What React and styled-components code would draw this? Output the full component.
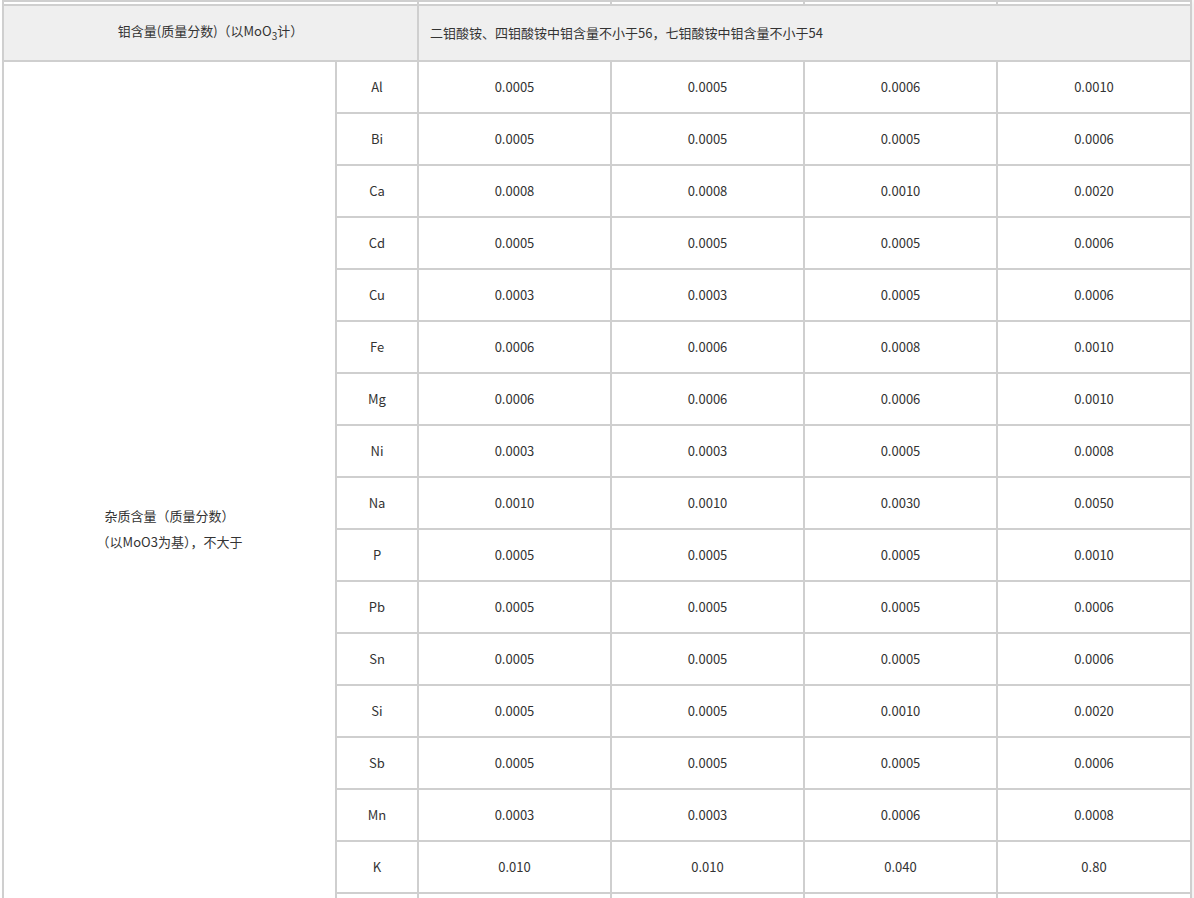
import React from "react";
import styled, { createGlobalStyle } from "styled-components";

const Global = createGlobalStyle`
  html, body { margin: 0; padding: 0; background: #fff; overflow: hidden; }
  body { font-family: "Microsoft YaHei", "Noto Sans CJK SC", "Noto Sans", sans-serif; color: #333; }
`;

const Page = styled.div`
  padding-left: 2px;
  width: 1190px;
`;

const Table = styled.table`
  border-collapse: collapse;
  table-layout: fixed;
  width: 1190px;
  font-size: 13px;
  box-shadow: 4px 0 6px rgba(0,0,0,0.06);
`;

const Col = styled.col`
  width: ${(p) => p.$w}px;
`;

const Cell = styled.td`
  border: 2px solid #cfcfcf;
  text-align: ${(p) => (p.$left ? "left" : "center")};
  padding: 0 ${(p) => (p.$left ? "11px" : "0")};
  height: ${(p) => p.$h || 50}px;
  background: ${(p) => (p.$head ? "#efefef" : "#fff")};
  line-height: 26px;
  vertical-align: middle;
  white-space: nowrap;
`;

const Sub = styled.sub`
  font-size: 10px;
`;

const TopCell = styled.td`
  border: 2px solid #cfcfcf;
  height: 2px;
  padding: 0;
  background: #fff;
`;

const rows = [
  ["Al", "0.0005", "0.0005", "0.0006", "0.0010"],
  ["Bi", "0.0005", "0.0005", "0.0005", "0.0006"],
  ["Ca", "0.0008", "0.0008", "0.0010", "0.0020"],
  ["Cd", "0.0005", "0.0005", "0.0005", "0.0006"],
  ["Cu", "0.0003", "0.0003", "0.0005", "0.0006"],
  ["Fe", "0.0006", "0.0006", "0.0008", "0.0010"],
  ["Mg", "0.0006", "0.0006", "0.0006", "0.0010"],
  ["Ni", "0.0003", "0.0003", "0.0005", "0.0008"],
  ["Na", "0.0010", "0.0010", "0.0030", "0.0050"],
  ["P", "0.0005", "0.0005", "0.0005", "0.0010"],
  ["Pb", "0.0005", "0.0005", "0.0005", "0.0006"],
  ["Sn", "0.0005", "0.0005", "0.0005", "0.0006"],
  ["Si", "0.0005", "0.0005", "0.0010", "0.0020"],
  ["Sb", "0.0005", "0.0005", "0.0005", "0.0006"],
  ["Mn", "0.0003", "0.0003", "0.0006", "0.0008"],
  ["K", "0.010", "0.010", "0.040", "0.80"],
  ["", "", "", "", ""],
  ["", "", "", "", ""],
];

export default function App() {
  return (
    <Page>
      <Global />
      <Table>
        <colgroup>
          <Col $w={333} />
          <Col $w={82} />
          <Col $w={193} />
          <Col $w={193} />
          <Col $w={193} />
          <Col $w={194} />
        </colgroup>
        <tbody>
          <tr>
            <TopCell colSpan={2} />
            <TopCell />
            <TopCell />
            <TopCell />
            <TopCell />
          </tr>
          <tr>
            <Cell $head $h={54} colSpan={2}>
              钼含量(质量分数)（以MoO<Sub>3</Sub>计）
            </Cell>
            <Cell $head $left colSpan={4}>
              二钼酸铵、四钼酸铵中钼含量不小于56，七钼酸铵中钼含量不小于54
            </Cell>
          </tr>
          {rows.map((r, i) => (
            <tr key={i}>
              {i === 0 && (
                <Cell rowSpan={rows.length}>
                  杂质含量（质量分数）
                  <br />
                  （以MoO3为基），不大于
                </Cell>
              )}
              {r.map((v, j) => (
                <Cell key={j}>{v}</Cell>
              ))}
            </tr>
          ))}
        </tbody>
      </Table>
    </Page>
  );
}
